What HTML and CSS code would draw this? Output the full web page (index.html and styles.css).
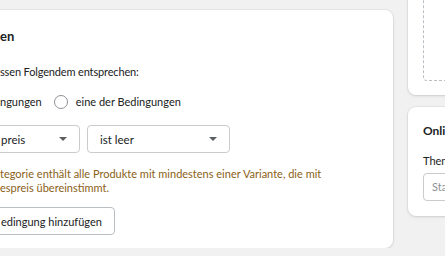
FILE: index.html
```html
<!DOCTYPE html>
<html lang="de">
<head>
  <meta charset="UTF-8">
  <meta name="viewport" content="width=device-width, initial-scale=1.0">
  <title>Kategorie bearbeiten</title>
  <link rel="stylesheet" href="styles.css">
</head>
<body>
  <div class="layout">
    <div class="main-col">
      <div class="card conditions">
        <h2 class="card-title">en</h2>
        <p class="hint">ssen Folgendem entsprechen:</p>

        <div class="radio-row">
          <label class="radio-option">ngungen</label>
          <label class="radio-option"><span class="radio"></span>eine der Bedingungen</label>
        </div>

        <div class="rule-row">
          <div class="select select-field">
            <span>preis</span>
            <span class="caret"></span>
          </div>
          <div class="select select-op">
            <span>ist leer</span>
            <span class="caret"></span>
          </div>
        </div>

        <p class="warning">tegorie enthält alle Produkte mit mindestens einer Variante, die mit<br>espreis übereinstimmt.</p>

        <button class="button">edingung hinzufügen</button>
      </div>
    </div>

    <div class="side-col">
      <div class="card image-card">
        <div class="dropzone"></div>
      </div>
      <div class="card store-card">
        <h3 class="side-title">Online-Shop</h3>
        <div class="field-label">Theme-Vorlage</div>
        <div class="input">Standardkategorie</div>
      </div>
    </div>
  </div>
</body>
</html>
```

FILE: styles.css
```css
body {
  margin: 0;
  background-color: #f1f1f2;
  font-family: Lato, "Liberation Sans", Arial, sans-serif;
  font-size: 11px;
  color: #202223;
  overflow: hidden;
}
.layout {
  display: flex;
  gap: 15px;
  padding-top: 10px;
}
.main-col {
  width: 413px;
  margin-left: -20px;
  flex-shrink: 0;
}
.card {
  background-color: #fff;
  border-radius: 8px;
  box-shadow: 0 0 0 1px rgba(63, 63, 68, 0.05), 0 1px 3px rgba(63, 63, 68, 0.15);
}
.conditions {
  padding: 16px 0 14px 20px;
  height: 238px;
  box-sizing: border-box;
}
.card-title {
  margin: 0;
  font-size: 13px;
  font-weight: 700;
  line-height: 20px;
}
.hint {
  margin: 16px 0 0;
  line-height: 20px;
  letter-spacing: -0.15px;
}
.radio-row {
  display: flex;
  align-items: center;
  gap: 12px;
  margin-top: 10px;
  line-height: 20px;
}
.radio-option {
  display: flex;
  align-items: center;
}
.radio {
  width: 14px;
  height: 14px;
  box-sizing: border-box;
  border: 1.5px solid #8c9196;
  border-radius: 50%;
  margin-right: 8px;
}
.rule-row {
  display: flex;
  gap: 7px;
  margin-top: 13px;
}
.select {
  display: flex;
  align-items: center;
  justify-content: space-between;
  height: 28px;
  box-sizing: border-box;
  border: 1px solid #c9cccf;
  border-radius: 4px;
  padding: 0 12px;
  font-size: 11.5px;
}
.select-field {
  width: 100px;
  margin-left: -20px;
  padding-left: 20px;
}
.select-op {
  width: 143px;
}
.caret {
  width: 0;
  height: 0;
  border-left: 4px solid transparent;
  border-right: 4px solid transparent;
  border-top: 4px solid #5c5f62;
}
.warning {
  margin: 14px 0 0;
  line-height: 14px;
  color: #8a6116;
}
.button {
  display: block;
  margin: 12px 0 0 -20px;
  padding: 0 12px 0 20px;
  height: 28px;
  background-color: #fff;
  border: 1px solid #babfc3;
  border-radius: 4px;
  font-family: inherit;
  font-size: 11px;
  color: #202223;
}
.side-col {
  width: 200px;
  flex-shrink: 0;
  margin-top: -40px;
}
.image-card {
  padding: 0 0 16px 15px;
  height: 125px;
  box-sizing: border-box;
}
.dropzone {
  height: 100%;
  border: 1px dashed #babfc3;
  border-radius: 4px;
}
.store-card {
  margin-top: 12px;
  padding: 14px 0 15px 15px;
  height: 109px;
  box-sizing: border-box;
}
.side-title {
  margin: 0;
  font-size: 12px;
  font-weight: 700;
  line-height: 20px;
}
.field-label {
  margin-top: 12px;
  line-height: 16px;
}
.input {
  margin-top: 4px;
  height: 28px;
  box-sizing: border-box;
  border: 1px solid #c9cccf;
  border-radius: 4px;
  padding: 0 8px;
  line-height: 26px;
  color: #8c9196;
}
```
